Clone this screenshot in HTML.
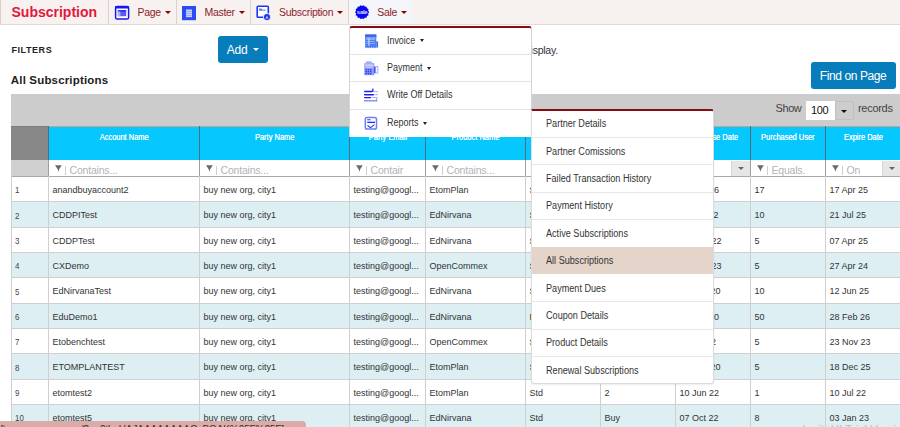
<!DOCTYPE html>
<html><head><meta charset="utf-8"><style>
html,body{margin:0;padding:0;}
body{width:900px;height:427px;overflow:hidden;position:relative;background:#fff;font-family:"Liberation Sans", sans-serif;}
.t{position:absolute;white-space:nowrap;}
.r{position:absolute;}
</style></head><body>
<div class="r" style="left:0px;top:0px;width:900px;height:24px;background:#f7f2ef;"></div>
<div class="r" style="left:0px;top:24px;width:900px;height:1px;background:#e2dcd8;"></div>
<div class="r" style="left:0px;top:0px;width:1px;height:24px;background:#d5d0cc;"></div>
<div class="t " style="left:11.5px;top:5.15px;font-size:14px;line-height:14px;color:#e3173d;font-weight:bold;letter-spacing:0px;">Subscription</div>
<div class="r" style="left:108px;top:0px;width:1px;height:24px;background:#d9d2ce;"></div>
<div class="r" style="left:176px;top:0px;width:1px;height:24px;background:#d9d2ce;"></div>
<div class="r" style="left:250px;top:0px;width:1px;height:24px;background:#d9d2ce;"></div>
<div class="r" style="left:348px;top:0px;width:1px;height:24px;background:#d9d2ce;"></div>
<div class="r" style="left:349px;top:0px;width:63px;height:24px;background:#f4f5f8;"></div>
<svg class="r" style="left:114px;top:5px" width="16" height="15" viewBox="0 0 16 15"><rect x="1.6" y="1.5" width="13" height="12.6" rx="1.6" fill="#fff" stroke="#1616ee" stroke-width="1.5"/><rect x="1" y="1" width="14" height="2.6" rx="1" fill="#1616ee"/><rect x="3.8" y="5.3" width="8.4" height="5.9" fill="#5b5bf0"/><rect x="3.8" y="5.3" width="8.4" height="1.2" fill="#1616ee"/><rect x="3.8" y="6.5" width="2.6" height="4.7" fill="#b0b0f6"/></svg>
<div class="t " style="left:137.5px;top:6.61px;font-size:10.5px;line-height:10.5px;color:#8c1d2e;font-weight:normal;letter-spacing:-0.3px;">Page</div>
<div class="r" style="left:164.5px;top:10.8px;width:0;height:0;border-left:3.0px solid transparent;border-right:3.0px solid transparent;border-top:3.3px solid #8b0000;"></div>
<svg class="r" style="left:182px;top:5.5px" width="15" height="15" viewBox="0 0 15 15"><rect x="0" y="0" width="14" height="14.2" fill="#2a4cf4"/><rect x="4" y="3.5" width="6" height="7.7" fill="#c9d2fb"/><rect x="4" y="5.2" width="6" height="0.6" fill="#7f93f6"/><rect x="4" y="7.1" width="6" height="0.6" fill="#7f93f6"/><rect x="4" y="9.0" width="6" height="0.6" fill="#7f93f6"/></svg>
<div class="t " style="left:204.5px;top:6.61px;font-size:10.5px;line-height:10.5px;color:#8c1d2e;font-weight:normal;letter-spacing:-0.3px;">Master</div>
<div class="r" style="left:238.5px;top:10.8px;width:0;height:0;border-left:3.0px solid transparent;border-right:3.0px solid transparent;border-top:3.3px solid #8b0000;"></div>
<svg class="r" style="left:256px;top:5px" width="16" height="16" viewBox="0 0 16 16"><path d="M8 12.3 H2 Q1.2 12.3 1.2 11.5 V2 Q1.2 1.2 2 1.2 H11.5 Q12.3 1.2 12.3 2 V8.8" fill="#fff" stroke="#1a34f2" stroke-width="1.6"/><rect x="3.2" y="3.5" width="2.6" height="1.8" fill="#5a6ef4"/><rect x="3.2" y="4.6" width="6.5" height="1" fill="#5a6ef4"/><circle cx="11" cy="12" r="3.6" fill="#1a34f2" stroke="#fff" stroke-width="0.8"/><path d="M9.6 13.6 L11 10.4 L12.4 13.6 Z" fill="#c8d0fc"/></svg>
<div class="t " style="left:279px;top:6.61px;font-size:10.5px;line-height:10.5px;color:#8c1d2e;font-weight:normal;letter-spacing:-0.3px;">Subscription</div>
<div class="r" style="left:337px;top:10.8px;width:0;height:0;border-left:3.0px solid transparent;border-right:3.0px solid transparent;border-top:3.3px solid #8b0000;"></div>
<svg class="r" style="left:354.5px;top:5.3px" width="15" height="15" viewBox="0 0 15 15"><polygon points="14.20,7.20 13.14,8.58 13.50,10.28 11.95,11.07 11.53,12.75 9.79,12.79 8.68,14.12 7.10,13.40 5.52,14.12 4.41,12.79 2.67,12.75 2.25,11.07 0.70,10.28 1.06,8.58 0.00,7.20 1.06,5.82 0.70,4.12 2.25,3.33 2.67,1.65 4.41,1.61 5.52,0.28 7.10,1.00 8.68,0.28 9.79,1.61 11.53,1.65 11.95,3.33 13.50,4.12 13.14,5.82" fill="#0808f2"/><text x="7.1" y="9.3" font-family="Liberation Sans" font-size="6" font-weight="bold" fill="#dcdcff" text-anchor="middle" letter-spacing="-0.3">sale</text></svg>
<div class="t " style="left:377.2px;top:6.81px;font-size:10.5px;line-height:10.5px;color:#8c1d2e;font-weight:normal;letter-spacing:-0.3px;">Sale</div>
<div class="r" style="left:401px;top:10.8px;width:0;height:0;border-left:3.0px solid transparent;border-right:3.0px solid transparent;border-top:3.3px solid #8b0000;"></div>
<div class="t " style="left:11.5px;top:46.28px;font-size:9px;line-height:9px;color:#222;font-weight:bold;letter-spacing:0.55px;">FILTERS</div>
<div class="r" style="left:218px;top:36px;width:50px;height:27px;background:#077dbc;border-radius:3px;"></div>
<div class="t " style="left:226.8px;top:43.94px;font-size:12px;line-height:12px;color:#fff;font-weight:normal;letter-spacing:-0.2px;">Add</div>
<div class="r" style="left:253.4px;top:48.3px;width:0;height:0;border-left:3.0px solid transparent;border-right:3.0px solid transparent;border-top:3px solid #fff;"></div>
<div class="t" style="right:342.20000000000005px;top:44.61px;font-size:10.5px;line-height:10.5px;color:#333;letter-spacing:-0.25px">No records to display.</div>
<div class="t " style="left:10.8px;top:75.27px;font-size:11.5px;line-height:11.5px;color:#222;font-weight:bold;letter-spacing:0.17px;">All Subscriptions</div>
<div class="r" style="left:811px;top:62px;width:85px;height:27px;background:#077dbc;border-radius:3px;"></div>
<div class="t " style="left:819.8px;top:70.14px;font-size:12px;line-height:12px;color:#fff;font-weight:normal;letter-spacing:-0.4px;">Find on Page</div>
<div class="r" style="left:11px;top:94px;width:889px;height:32px;background:#cccccc;"></div>
<div class="t " style="left:775.5px;top:103.39px;font-size:11px;line-height:11px;color:#444;font-weight:normal;letter-spacing:-0.4px;">Show</div>
<div class="r" style="left:805.5px;top:101px;width:29px;height:19px;background:#fff;"></div>
<div class="r" style="left:834.5px;top:101px;width:19.5px;height:19px;background:#cdcdcd;border:1px solid #c0c0c0;border-radius:0 2px 2px 0;box-sizing:border-box;"></div>
<div class="t " style="left:811px;top:104.99px;font-size:11px;line-height:11px;color:#111;font-weight:normal;letter-spacing:-0.4px;">100</div>
<div class="r" style="left:841px;top:109.5px;width:0;height:0;border-left:3.0px solid transparent;border-right:3.0px solid transparent;border-top:3px solid #111;"></div>
<div class="t " style="left:858px;top:103.39px;font-size:11px;line-height:11px;color:#444;font-weight:normal;letter-spacing:-0.3px;">records</div>
<div class="r" style="left:11px;top:126px;width:37px;height:34px;background:#888888;"></div>
<div class="r" style="left:48px;top:126px;width:852px;height:34px;background:#06c8ff;"></div>
<div class="r" style="left:48px;top:126px;width:852px;height:1px;background:#c0a496;"></div>
<div class="r" style="left:11px;top:126px;width:37px;height:1px;background:#7c7c7c;"></div>
<div class="r" style="left:48px;top:126px;width:1px;height:34px;background:#4e6f7a;"></div>
<div class="r" style="left:199px;top:126px;width:1px;height:34px;background:#4e6f7a;"></div>
<div class="r" style="left:349px;top:126px;width:1px;height:34px;background:#4e6f7a;"></div>
<div class="r" style="left:425px;top:126px;width:1px;height:34px;background:#4e6f7a;"></div>
<div class="r" style="left:525px;top:126px;width:1px;height:34px;background:#4e6f7a;"></div>
<div class="r" style="left:600px;top:126px;width:1px;height:34px;background:#4e6f7a;"></div>
<div class="r" style="left:675px;top:126px;width:1px;height:34px;background:#4e6f7a;"></div>
<div class="r" style="left:750px;top:126px;width:1px;height:34px;background:#4e6f7a;"></div>
<div class="r" style="left:825px;top:126px;width:1px;height:34px;background:#4e6f7a;"></div>
<div class="t" style="left:48.5px;width:151px;top:132.72px;font-size:8.6px;line-height:8.6px;color:#fff;text-align:center;"><span style="display:inline-block;transform:scaleX(0.87);text-shadow:0 0 0.3px #fff">Account Name</span></div>
<div class="t" style="left:199.5px;width:150px;top:132.72px;font-size:8.6px;line-height:8.6px;color:#fff;text-align:center;"><span style="display:inline-block;transform:scaleX(0.87);text-shadow:0 0 0.3px #fff">Party Name</span></div>
<div class="t" style="left:349.5px;width:76px;top:132.72px;font-size:8.6px;line-height:8.6px;color:#fff;text-align:center;"><span style="display:inline-block;transform:scaleX(0.87);text-shadow:0 0 0.3px #fff">Party Email</span></div>
<div class="t" style="left:425.5px;width:100px;top:132.72px;font-size:8.6px;line-height:8.6px;color:#fff;text-align:center;"><span style="display:inline-block;transform:scaleX(0.87);text-shadow:0 0 0.3px #fff">Product Name</span></div>
<div class="t" style="left:525.5px;width:75px;top:132.72px;font-size:8.6px;line-height:8.6px;color:#fff;text-align:center;"><span style="display:inline-block;transform:scaleX(0.87);text-shadow:0 0 0.3px #fff">Plan Type</span></div>
<div class="t" style="left:600.5px;width:75px;top:132.72px;font-size:8.6px;line-height:8.6px;color:#fff;text-align:center;"><span style="display:inline-block;transform:scaleX(0.87);text-shadow:0 0 0.3px #fff">Sub Type</span></div>
<div class="t" style="left:675.5px;width:75px;top:132.72px;font-size:8.6px;line-height:8.6px;color:#fff;text-align:center;"><span style="display:inline-block;transform:scaleX(0.87);text-shadow:0 0 0.3px #fff">Purchase Date</span></div>
<div class="t" style="left:750.5px;width:75px;top:132.72px;font-size:8.6px;line-height:8.6px;color:#fff;text-align:center;"><span style="display:inline-block;transform:scaleX(0.87);text-shadow:0 0 0.3px #fff">Purchased User</span></div>
<div class="t" style="left:825.5px;width:75px;top:132.72px;font-size:8.6px;line-height:8.6px;color:#fff;text-align:center;"><span style="display:inline-block;transform:scaleX(0.87);text-shadow:0 0 0.3px #fff">Expire Date</span></div>
<div class="r" style="left:11px;top:160px;width:37px;height:16px;background:#d0d0d0;"></div>
<div class="r" style="left:48px;top:160px;width:852px;height:16px;background:#fff;"></div>
<div class="r" style="left:11px;top:176px;width:889px;height:1px;background:#a9a9a9;"></div>
<div class="r" style="left:48px;top:160px;width:1px;height:16px;background:#a0a0a0;"></div>
<svg class="r" style="left:54.6px;top:164.6px" width="7" height="7" viewBox="0 0 7 7"><path d="M0 0.2 H6.8 L4 4.6 L3.7 6.2 H3.1 L2.8 4.6 Z" fill="#6a6a6a"/></svg>
<div class="r" style="left:65px;top:166.2px;width:1px;height:9.3px;background:#d6cdc8;"></div>
<div class="t " style="left:69.5px;top:165.11px;font-size:10.5px;line-height:10.5px;color:#b2b2ba;font-weight:normal;letter-spacing:-0.2px;">Contains...</div>
<div class="r" style="left:199px;top:160px;width:1px;height:16px;background:#a0a0a0;"></div>
<svg class="r" style="left:205.6px;top:164.6px" width="7" height="7" viewBox="0 0 7 7"><path d="M0 0.2 H6.8 L4 4.6 L3.7 6.2 H3.1 L2.8 4.6 Z" fill="#6a6a6a"/></svg>
<div class="r" style="left:216px;top:166.2px;width:1px;height:9.3px;background:#d6cdc8;"></div>
<div class="t " style="left:220.5px;top:165.11px;font-size:10.5px;line-height:10.5px;color:#b2b2ba;font-weight:normal;letter-spacing:-0.2px;">Contains...</div>
<div class="r" style="left:349px;top:160px;width:1px;height:16px;background:#a0a0a0;"></div>
<svg class="r" style="left:355.6px;top:164.6px" width="7" height="7" viewBox="0 0 7 7"><path d="M0 0.2 H6.8 L4 4.6 L3.7 6.2 H3.1 L2.8 4.6 Z" fill="#6a6a6a"/></svg>
<div class="r" style="left:366px;top:166.2px;width:1px;height:9.3px;background:#d6cdc8;"></div>
<div class="t " style="left:370.5px;top:165.11px;font-size:10.5px;line-height:10.5px;color:#b2b2ba;font-weight:normal;letter-spacing:-0.2px;">Contair</div>
<div class="r" style="left:425px;top:160px;width:1px;height:16px;background:#a0a0a0;"></div>
<svg class="r" style="left:431.6px;top:164.6px" width="7" height="7" viewBox="0 0 7 7"><path d="M0 0.2 H6.8 L4 4.6 L3.7 6.2 H3.1 L2.8 4.6 Z" fill="#6a6a6a"/></svg>
<div class="r" style="left:442px;top:166.2px;width:1px;height:9.3px;background:#d6cdc8;"></div>
<div class="t " style="left:446.5px;top:165.11px;font-size:10.5px;line-height:10.5px;color:#b2b2ba;font-weight:normal;letter-spacing:-0.2px;">Contains...</div>
<div class="r" style="left:525px;top:160px;width:1px;height:16px;background:#a0a0a0;"></div>
<svg class="r" style="left:531.6px;top:164.6px" width="7" height="7" viewBox="0 0 7 7"><path d="M0 0.2 H6.8 L4 4.6 L3.7 6.2 H3.1 L2.8 4.6 Z" fill="#6a6a6a"/></svg>
<div class="r" style="left:542px;top:166.2px;width:1px;height:9.3px;background:#d6cdc8;"></div>
<div class="t " style="left:546.5px;top:165.11px;font-size:10.5px;line-height:10.5px;color:#b2b2ba;font-weight:normal;letter-spacing:-0.2px;">Contains...</div>
<div class="r" style="left:600px;top:160px;width:1px;height:16px;background:#a0a0a0;"></div>
<svg class="r" style="left:606.6px;top:164.6px" width="7" height="7" viewBox="0 0 7 7"><path d="M0 0.2 H6.8 L4 4.6 L3.7 6.2 H3.1 L2.8 4.6 Z" fill="#6a6a6a"/></svg>
<div class="r" style="left:617px;top:166.2px;width:1px;height:9.3px;background:#d6cdc8;"></div>
<div class="t " style="left:621.5px;top:165.11px;font-size:10.5px;line-height:10.5px;color:#b2b2ba;font-weight:normal;letter-spacing:-0.2px;">Contains...</div>
<div class="r" style="left:675px;top:160px;width:1px;height:16px;background:#a0a0a0;"></div>
<svg class="r" style="left:681.6px;top:164.6px" width="7" height="7" viewBox="0 0 7 7"><path d="M0 0.2 H6.8 L4 4.6 L3.7 6.2 H3.1 L2.8 4.6 Z" fill="#6a6a6a"/></svg>
<div class="r" style="left:692px;top:166.2px;width:1px;height:9.3px;background:#d6cdc8;"></div>
<div class="r" style="left:750px;top:160px;width:1px;height:16px;background:#a0a0a0;"></div>
<svg class="r" style="left:756.6px;top:164.6px" width="7" height="7" viewBox="0 0 7 7"><path d="M0 0.2 H6.8 L4 4.6 L3.7 6.2 H3.1 L2.8 4.6 Z" fill="#6a6a6a"/></svg>
<div class="r" style="left:767px;top:166.2px;width:1px;height:9.3px;background:#d6cdc8;"></div>
<div class="t " style="left:771.5px;top:165.11px;font-size:10.5px;line-height:10.5px;color:#b2b2ba;font-weight:normal;letter-spacing:-0.2px;">Equals.</div>
<div class="r" style="left:825px;top:160px;width:1px;height:16px;background:#a0a0a0;"></div>
<svg class="r" style="left:831.6px;top:164.6px" width="7" height="7" viewBox="0 0 7 7"><path d="M0 0.2 H6.8 L4 4.6 L3.7 6.2 H3.1 L2.8 4.6 Z" fill="#6a6a6a"/></svg>
<div class="r" style="left:842px;top:166.2px;width:1px;height:9.3px;background:#d6cdc8;"></div>
<div class="t " style="left:846.5px;top:165.11px;font-size:10.5px;line-height:10.5px;color:#b2b2ba;font-weight:normal;letter-spacing:-0.2px;">On</div>
<div class="r" style="left:731px;top:160.5px;width:18.5px;height:15px;background:#e6e6e6;border-left:1px solid #d6d6d6;box-sizing:border-box;"></div>
<div class="r" style="left:737.5px;top:167px;width:0;height:0;border-left:3.0px solid transparent;border-right:3.0px solid transparent;border-top:3px solid #666;"></div>
<div class="r" style="left:882px;top:160.5px;width:18.5px;height:15px;background:#e6e6e6;border-left:1px solid #d6d6d6;box-sizing:border-box;"></div>
<div class="r" style="left:888.5px;top:167px;width:0;height:0;border-left:3.0px solid transparent;border-right:3.0px solid transparent;border-top:3px solid #666;"></div>
<div class="r" style="left:11px;top:177.0px;width:889px;height:24.833px;background:#ffffff;"></div>
<div class="r" style="left:11px;top:201.333px;width:889px;height:1.3px;background:#cfcfcf;"></div>
<div class="t " style="left:14.5px;top:186.22px;font-size:8.6px;line-height:8.6px;color:#444;font-weight:normal;letter-spacing:0px;transform:scaleX(0.92);transform-origin:0 0;">1</div>
<div class="t " style="left:52.5px;top:185.88px;font-size:9px;line-height:9px;color:#333;font-weight:normal;letter-spacing:0px;">anandbuyaccount2</div>
<div class="t " style="left:203.5px;top:185.88px;font-size:9px;line-height:9px;color:#333;font-weight:normal;letter-spacing:0px;">buy new org, city1</div>
<div class="t " style="left:353.5px;top:185.88px;font-size:9px;line-height:9px;color:#333;font-weight:normal;letter-spacing:0px;">testing@googl...</div>
<div class="t " style="left:429.5px;top:185.88px;font-size:9px;line-height:9px;color:#333;font-weight:normal;letter-spacing:0px;">EtomPlan</div>
<div class="t " style="left:529.5px;top:185.88px;font-size:9px;line-height:9px;color:#333;font-weight:normal;letter-spacing:0px;">Std</div>
<div class="t " style="left:604.5px;top:185.88px;font-size:9px;line-height:9px;color:#333;font-weight:normal;letter-spacing:0px;">Buy</div>
<div class="t " style="left:679.5px;top:185.88px;font-size:9px;line-height:9px;color:#333;font-weight:normal;letter-spacing:0px;">17 Jun 16</div>
<div class="t " style="left:754.5px;top:185.88px;font-size:9px;line-height:9px;color:#333;font-weight:normal;letter-spacing:0px;">17</div>
<div class="t " style="left:829.5px;top:185.88px;font-size:9px;line-height:9px;color:#333;font-weight:normal;letter-spacing:0px;">17 Apr 25</div>
<div class="r" style="left:11px;top:202.333px;width:889px;height:24.833px;background:#ddeff3;"></div>
<div class="r" style="left:11px;top:226.666px;width:889px;height:1.3px;background:#cfcfcf;"></div>
<div class="t " style="left:14.5px;top:211.55px;font-size:8.6px;line-height:8.6px;color:#444;font-weight:normal;letter-spacing:0px;transform:scaleX(0.92);transform-origin:0 0;">2</div>
<div class="t " style="left:52.5px;top:211.21px;font-size:9px;line-height:9px;color:#333;font-weight:normal;letter-spacing:0px;">CDDPITest</div>
<div class="t " style="left:203.5px;top:211.21px;font-size:9px;line-height:9px;color:#333;font-weight:normal;letter-spacing:0px;">buy new org, city1</div>
<div class="t " style="left:353.5px;top:211.21px;font-size:9px;line-height:9px;color:#333;font-weight:normal;letter-spacing:0px;">testing@googl...</div>
<div class="t " style="left:429.5px;top:211.21px;font-size:9px;line-height:9px;color:#333;font-weight:normal;letter-spacing:0px;">EdNirvana</div>
<div class="t " style="left:529.5px;top:211.21px;font-size:9px;line-height:9px;color:#333;font-weight:normal;letter-spacing:0px;">Std</div>
<div class="t " style="left:604.5px;top:211.21px;font-size:9px;line-height:9px;color:#333;font-weight:normal;letter-spacing:0px;">Buy</div>
<div class="t " style="left:679.5px;top:211.21px;font-size:9px;line-height:9px;color:#333;font-weight:normal;letter-spacing:0px;">21 Oct 22</div>
<div class="t " style="left:754.5px;top:211.21px;font-size:9px;line-height:9px;color:#333;font-weight:normal;letter-spacing:0px;">10</div>
<div class="t " style="left:829.5px;top:211.21px;font-size:9px;line-height:9px;color:#333;font-weight:normal;letter-spacing:0px;">21 Jul 25</div>
<div class="r" style="left:11px;top:227.666px;width:889px;height:24.833px;background:#ffffff;"></div>
<div class="r" style="left:11px;top:251.999px;width:889px;height:1.3px;background:#cfcfcf;"></div>
<div class="t " style="left:14.5px;top:236.89px;font-size:8.6px;line-height:8.6px;color:#444;font-weight:normal;letter-spacing:0px;transform:scaleX(0.92);transform-origin:0 0;">3</div>
<div class="t " style="left:52.5px;top:236.55px;font-size:9px;line-height:9px;color:#333;font-weight:normal;letter-spacing:0px;">CDDPTest</div>
<div class="t " style="left:203.5px;top:236.55px;font-size:9px;line-height:9px;color:#333;font-weight:normal;letter-spacing:0px;">buy new org, city1</div>
<div class="t " style="left:353.5px;top:236.55px;font-size:9px;line-height:9px;color:#333;font-weight:normal;letter-spacing:0px;">testing@googl...</div>
<div class="t " style="left:429.5px;top:236.55px;font-size:9px;line-height:9px;color:#333;font-weight:normal;letter-spacing:0px;">EdNirvana</div>
<div class="t " style="left:529.5px;top:236.55px;font-size:9px;line-height:9px;color:#333;font-weight:normal;letter-spacing:0px;">Std</div>
<div class="t " style="left:604.5px;top:236.55px;font-size:9px;line-height:9px;color:#333;font-weight:normal;letter-spacing:0px;">Buy</div>
<div class="t " style="left:679.5px;top:236.55px;font-size:9px;line-height:9px;color:#333;font-weight:normal;letter-spacing:0px;">07 May 22</div>
<div class="t " style="left:754.5px;top:236.55px;font-size:9px;line-height:9px;color:#333;font-weight:normal;letter-spacing:0px;">5</div>
<div class="t " style="left:829.5px;top:236.55px;font-size:9px;line-height:9px;color:#333;font-weight:normal;letter-spacing:0px;">07 Apr 25</div>
<div class="r" style="left:11px;top:252.999px;width:889px;height:24.833px;background:#ddeff3;"></div>
<div class="r" style="left:11px;top:277.332px;width:889px;height:1.3px;background:#cfcfcf;"></div>
<div class="t " style="left:14.5px;top:262.22px;font-size:8.6px;line-height:8.6px;color:#444;font-weight:normal;letter-spacing:0px;transform:scaleX(0.92);transform-origin:0 0;">4</div>
<div class="t " style="left:52.5px;top:261.88px;font-size:9px;line-height:9px;color:#333;font-weight:normal;letter-spacing:0px;">CXDemo</div>
<div class="t " style="left:203.5px;top:261.88px;font-size:9px;line-height:9px;color:#333;font-weight:normal;letter-spacing:0px;">buy new org, city1</div>
<div class="t " style="left:353.5px;top:261.88px;font-size:9px;line-height:9px;color:#333;font-weight:normal;letter-spacing:0px;">testing@googl...</div>
<div class="t " style="left:429.5px;top:261.88px;font-size:9px;line-height:9px;color:#333;font-weight:normal;letter-spacing:0px;">OpenCommex</div>
<div class="t " style="left:529.5px;top:261.88px;font-size:9px;line-height:9px;color:#333;font-weight:normal;letter-spacing:0px;">Std</div>
<div class="t " style="left:604.5px;top:261.88px;font-size:9px;line-height:9px;color:#333;font-weight:normal;letter-spacing:0px;">Buy</div>
<div class="t " style="left:679.5px;top:261.88px;font-size:9px;line-height:9px;color:#333;font-weight:normal;letter-spacing:0px;">27 May 23</div>
<div class="t " style="left:754.5px;top:261.88px;font-size:9px;line-height:9px;color:#333;font-weight:normal;letter-spacing:0px;">5</div>
<div class="t " style="left:829.5px;top:261.88px;font-size:9px;line-height:9px;color:#333;font-weight:normal;letter-spacing:0px;">27 Apr 24</div>
<div class="r" style="left:11px;top:278.332px;width:889px;height:24.83299999999997px;background:#ffffff;"></div>
<div class="r" style="left:11px;top:302.66499999999996px;width:889px;height:1.3px;background:#cfcfcf;"></div>
<div class="t " style="left:14.5px;top:287.55px;font-size:8.6px;line-height:8.6px;color:#444;font-weight:normal;letter-spacing:0px;transform:scaleX(0.92);transform-origin:0 0;">5</div>
<div class="t " style="left:52.5px;top:287.21px;font-size:9px;line-height:9px;color:#333;font-weight:normal;letter-spacing:0px;">EdNirvanaTest</div>
<div class="t " style="left:203.5px;top:287.21px;font-size:9px;line-height:9px;color:#333;font-weight:normal;letter-spacing:0px;">buy new org, city1</div>
<div class="t " style="left:353.5px;top:287.21px;font-size:9px;line-height:9px;color:#333;font-weight:normal;letter-spacing:0px;">testing@googl...</div>
<div class="t " style="left:429.5px;top:287.21px;font-size:9px;line-height:9px;color:#333;font-weight:normal;letter-spacing:0px;">EdNirvana</div>
<div class="t " style="left:529.5px;top:287.21px;font-size:9px;line-height:9px;color:#333;font-weight:normal;letter-spacing:0px;">Std</div>
<div class="t " style="left:604.5px;top:287.21px;font-size:9px;line-height:9px;color:#333;font-weight:normal;letter-spacing:0px;">Buy</div>
<div class="t " style="left:679.5px;top:287.21px;font-size:9px;line-height:9px;color:#333;font-weight:normal;letter-spacing:0px;">12 Sep 20</div>
<div class="t " style="left:754.5px;top:287.21px;font-size:9px;line-height:9px;color:#333;font-weight:normal;letter-spacing:0px;">10</div>
<div class="t " style="left:829.5px;top:287.21px;font-size:9px;line-height:9px;color:#333;font-weight:normal;letter-spacing:0px;">12 Jun 25</div>
<div class="r" style="left:11px;top:303.66499999999996px;width:889px;height:24.833000000000027px;background:#ddeff3;"></div>
<div class="r" style="left:11px;top:327.998px;width:889px;height:1.3px;background:#cfcfcf;"></div>
<div class="t " style="left:14.5px;top:312.89px;font-size:8.6px;line-height:8.6px;color:#444;font-weight:normal;letter-spacing:0px;transform:scaleX(0.92);transform-origin:0 0;">6</div>
<div class="t " style="left:52.5px;top:312.55px;font-size:9px;line-height:9px;color:#333;font-weight:normal;letter-spacing:0px;">EduDemo1</div>
<div class="t " style="left:203.5px;top:312.55px;font-size:9px;line-height:9px;color:#333;font-weight:normal;letter-spacing:0px;">buy new org, city1</div>
<div class="t " style="left:353.5px;top:312.55px;font-size:9px;line-height:9px;color:#333;font-weight:normal;letter-spacing:0px;">testing@googl...</div>
<div class="t " style="left:429.5px;top:312.55px;font-size:9px;line-height:9px;color:#333;font-weight:normal;letter-spacing:0px;">EdNirvana</div>
<div class="t " style="left:529.5px;top:312.55px;font-size:9px;line-height:9px;color:#333;font-weight:normal;letter-spacing:0px;">Pro</div>
<div class="t " style="left:604.5px;top:312.55px;font-size:9px;line-height:9px;color:#333;font-weight:normal;letter-spacing:0px;">Buy</div>
<div class="t " style="left:679.5px;top:312.55px;font-size:9px;line-height:9px;color:#333;font-weight:normal;letter-spacing:0px;">28 Jun 20</div>
<div class="t " style="left:754.5px;top:312.55px;font-size:9px;line-height:9px;color:#333;font-weight:normal;letter-spacing:0px;">50</div>
<div class="t " style="left:829.5px;top:312.55px;font-size:9px;line-height:9px;color:#333;font-weight:normal;letter-spacing:0px;">28 Feb 26</div>
<div class="r" style="left:11px;top:328.998px;width:889px;height:24.833000000000027px;background:#ffffff;"></div>
<div class="r" style="left:11px;top:353.331px;width:889px;height:1.3px;background:#cfcfcf;"></div>
<div class="t " style="left:14.5px;top:338.22px;font-size:8.6px;line-height:8.6px;color:#444;font-weight:normal;letter-spacing:0px;transform:scaleX(0.92);transform-origin:0 0;">7</div>
<div class="t " style="left:52.5px;top:337.88px;font-size:9px;line-height:9px;color:#333;font-weight:normal;letter-spacing:0px;">Etobenchtest</div>
<div class="t " style="left:203.5px;top:337.88px;font-size:9px;line-height:9px;color:#333;font-weight:normal;letter-spacing:0px;">buy new org, city1</div>
<div class="t " style="left:353.5px;top:337.88px;font-size:9px;line-height:9px;color:#333;font-weight:normal;letter-spacing:0px;">testing@googl...</div>
<div class="t " style="left:429.5px;top:337.88px;font-size:9px;line-height:9px;color:#333;font-weight:normal;letter-spacing:0px;">OpenCommex</div>
<div class="t " style="left:529.5px;top:337.88px;font-size:9px;line-height:9px;color:#333;font-weight:normal;letter-spacing:0px;">Std</div>
<div class="t " style="left:604.5px;top:337.88px;font-size:9px;line-height:9px;color:#333;font-weight:normal;letter-spacing:0px;">Buy</div>
<div class="t " style="left:679.5px;top:337.88px;font-size:9px;line-height:9px;color:#333;font-weight:normal;letter-spacing:0px;">23 Jul 22</div>
<div class="t " style="left:754.5px;top:337.88px;font-size:9px;line-height:9px;color:#333;font-weight:normal;letter-spacing:0px;">5</div>
<div class="t " style="left:829.5px;top:337.88px;font-size:9px;line-height:9px;color:#333;font-weight:normal;letter-spacing:0px;">23 Nov 23</div>
<div class="r" style="left:11px;top:354.331px;width:889px;height:24.83299999999997px;background:#ddeff3;"></div>
<div class="r" style="left:11px;top:378.664px;width:889px;height:1.3px;background:#cfcfcf;"></div>
<div class="t " style="left:14.5px;top:363.55px;font-size:8.6px;line-height:8.6px;color:#444;font-weight:normal;letter-spacing:0px;transform:scaleX(0.92);transform-origin:0 0;">8</div>
<div class="t " style="left:52.5px;top:363.21px;font-size:9px;line-height:9px;color:#333;font-weight:normal;letter-spacing:0px;">ETOMPLANTEST</div>
<div class="t " style="left:203.5px;top:363.21px;font-size:9px;line-height:9px;color:#333;font-weight:normal;letter-spacing:0px;">buy new org, city1</div>
<div class="t " style="left:353.5px;top:363.21px;font-size:9px;line-height:9px;color:#333;font-weight:normal;letter-spacing:0px;">testing@googl...</div>
<div class="t " style="left:429.5px;top:363.21px;font-size:9px;line-height:9px;color:#333;font-weight:normal;letter-spacing:0px;">EtomPlan</div>
<div class="t " style="left:529.5px;top:363.21px;font-size:9px;line-height:9px;color:#333;font-weight:normal;letter-spacing:0px;">Std</div>
<div class="t " style="left:604.5px;top:363.21px;font-size:9px;line-height:9px;color:#333;font-weight:normal;letter-spacing:0px;">Buy</div>
<div class="t " style="left:679.5px;top:363.21px;font-size:9px;line-height:9px;color:#333;font-weight:normal;letter-spacing:0px;">18 Sep 20</div>
<div class="t " style="left:754.5px;top:363.21px;font-size:9px;line-height:9px;color:#333;font-weight:normal;letter-spacing:0px;">5</div>
<div class="t " style="left:829.5px;top:363.21px;font-size:9px;line-height:9px;color:#333;font-weight:normal;letter-spacing:0px;">18 Dec 25</div>
<div class="r" style="left:11px;top:379.664px;width:889px;height:24.83299999999997px;background:#ffffff;"></div>
<div class="r" style="left:11px;top:403.99699999999996px;width:889px;height:1.3px;background:#cfcfcf;"></div>
<div class="t " style="left:14.5px;top:388.88px;font-size:8.6px;line-height:8.6px;color:#444;font-weight:normal;letter-spacing:0px;transform:scaleX(0.92);transform-origin:0 0;">9</div>
<div class="t " style="left:52.5px;top:388.55px;font-size:9px;line-height:9px;color:#333;font-weight:normal;letter-spacing:0px;">etomtest2</div>
<div class="t " style="left:203.5px;top:388.55px;font-size:9px;line-height:9px;color:#333;font-weight:normal;letter-spacing:0px;">buy new org, city1</div>
<div class="t " style="left:353.5px;top:388.55px;font-size:9px;line-height:9px;color:#333;font-weight:normal;letter-spacing:0px;">testing@googl...</div>
<div class="t " style="left:429.5px;top:388.55px;font-size:9px;line-height:9px;color:#333;font-weight:normal;letter-spacing:0px;">EtomPlan</div>
<div class="t " style="left:529.5px;top:388.55px;font-size:9px;line-height:9px;color:#333;font-weight:normal;letter-spacing:0px;">Std</div>
<div class="t " style="left:604.5px;top:388.55px;font-size:9px;line-height:9px;color:#333;font-weight:normal;letter-spacing:0px;">2</div>
<div class="t " style="left:679.5px;top:388.55px;font-size:9px;line-height:9px;color:#333;font-weight:normal;letter-spacing:0px;">10 Jun 22</div>
<div class="t " style="left:754.5px;top:388.55px;font-size:9px;line-height:9px;color:#333;font-weight:normal;letter-spacing:0px;">1</div>
<div class="t " style="left:829.5px;top:388.55px;font-size:9px;line-height:9px;color:#333;font-weight:normal;letter-spacing:0px;">10 Jul 22</div>
<div class="r" style="left:11px;top:404.99699999999996px;width:889px;height:24.833000000000027px;background:#ddeff3;"></div>
<div class="r" style="left:11px;top:429.33px;width:889px;height:1.3px;background:#cfcfcf;"></div>
<div class="t " style="left:14.5px;top:414.22px;font-size:8.6px;line-height:8.6px;color:#444;font-weight:normal;letter-spacing:0px;transform:scaleX(0.92);transform-origin:0 0;">10</div>
<div class="t " style="left:52.5px;top:413.88px;font-size:9px;line-height:9px;color:#333;font-weight:normal;letter-spacing:0px;">etomtest5</div>
<div class="t " style="left:203.5px;top:413.88px;font-size:9px;line-height:9px;color:#333;font-weight:normal;letter-spacing:0px;">buy new org, city1</div>
<div class="t " style="left:353.5px;top:413.88px;font-size:9px;line-height:9px;color:#333;font-weight:normal;letter-spacing:0px;">testing@googl...</div>
<div class="t " style="left:429.5px;top:413.88px;font-size:9px;line-height:9px;color:#333;font-weight:normal;letter-spacing:0px;">EdNirvana</div>
<div class="t " style="left:529.5px;top:413.88px;font-size:9px;line-height:9px;color:#333;font-weight:normal;letter-spacing:0px;">Std</div>
<div class="t " style="left:604.5px;top:413.88px;font-size:9px;line-height:9px;color:#333;font-weight:normal;letter-spacing:0px;">Buy</div>
<div class="t " style="left:679.5px;top:413.88px;font-size:9px;line-height:9px;color:#333;font-weight:normal;letter-spacing:0px;">07 Oct 22</div>
<div class="t " style="left:754.5px;top:413.88px;font-size:9px;line-height:9px;color:#333;font-weight:normal;letter-spacing:0px;">8</div>
<div class="t " style="left:829.5px;top:413.88px;font-size:9px;line-height:9px;color:#333;font-weight:normal;letter-spacing:0px;">03 Jan 23</div>
<div class="r" style="left:11px;top:176px;width:1.3px;height:251px;background:#cfcfcf;"></div>
<div class="r" style="left:48px;top:176px;width:1.3px;height:251px;background:#cfcfcf;"></div>
<div class="r" style="left:199px;top:176px;width:1.3px;height:251px;background:#cfcfcf;"></div>
<div class="r" style="left:349px;top:176px;width:1.3px;height:251px;background:#cfcfcf;"></div>
<div class="r" style="left:425px;top:176px;width:1.3px;height:251px;background:#cfcfcf;"></div>
<div class="r" style="left:525px;top:176px;width:1.3px;height:251px;background:#cfcfcf;"></div>
<div class="r" style="left:600px;top:176px;width:1.3px;height:251px;background:#cfcfcf;"></div>
<div class="r" style="left:675px;top:176px;width:1.3px;height:251px;background:#cfcfcf;"></div>
<div class="r" style="left:750px;top:176px;width:1.3px;height:251px;background:#cfcfcf;"></div>
<div class="r" style="left:825px;top:176px;width:1.3px;height:251px;background:#cfcfcf;"></div>
<div class="t " style="left:802.5px;top:423.77px;font-size:11.5px;line-height:11.5px;color:#bdbdbd;font-weight:normal;letter-spacing:0px;">IgniteUI Trial Version</div>
<div class="r" style="left:0;top:420.6px;width:306px;height:10px;background:#daaba7;border-top-right-radius:4px;overflow:hidden"><div class="t" style="right:22px;top:4.8px;font-size:10px;line-height:10px;color:#333;letter-spacing:-0.1px">javascript:__soft.nerve.sonar.com/?a=2tk=UAJAAAAAAAAC_BOAK%25F%25F]</div></div>
<div class="r" style="left:349px;top:26px;width:182.5px;height:111px;background:#fff;border-left:1px solid #d4d4d4;border-right:1px solid #d4d4d4;border-top:2px solid #8a0b12;border-radius:3px 3px 0 0;box-sizing:border-box;"></div>
<div class="r" style="left:350px;top:54px;width:180.5px;height:1px;background:#e4e4e4;"></div>
<div class="r" style="left:350px;top:81px;width:180.5px;height:1px;background:#e4e4e4;"></div>
<div class="r" style="left:350px;top:109px;width:180.5px;height:1px;background:#e4e4e4;"></div>
<svg class="r" style="left:365px;top:33.5px" width="14" height="15" viewBox="0 0 14 15"><path d="M0.2 0.5 H11.3 V13.2 L10.2 14.3 L9 13.2 L7.8 14.3 L6.6 13.2 L5.4 14.3 L4.2 13.2 L3 14.3 L1.8 13.2 L0.6 14.3 L0.2 13.8 Z" fill="#4c7cf2"/><rect x="0.2" y="0.5" width="11.1" height="2.8" fill="#3a68ee"/><rect x="1.2" y="3.6" width="9.5" height="0.8" fill="#dbe5fd"/><rect x="1.5" y="5" width="8.5" height="0.7" fill="#a8c0fa"/><rect x="1.5" y="7" width="8.5" height="0.7" fill="#a8c0fa"/><rect x="1.5" y="9" width="8.5" height="0.7" fill="#a8c0fa"/><rect x="3.2" y="4.4" width="1.3" height="7.5" fill="#b9cdfb"/><rect x="11.3" y="7.4" width="1.8" height="6.2" fill="#3d6cf0"/></svg>
<div class="t " style="left:387px;top:35.73px;font-size:10px;line-height:10px;color:#333;font-weight:normal;letter-spacing:0px;transform:scaleX(0.89);transform-origin:0 0;">Invoice</div>
<div class="r" style="left:419.6px;top:39.4px;width:0;height:0;border-left:2.8px solid transparent;border-right:2.8px solid transparent;border-top:3px solid #222;"></div>
<svg class="r" style="left:364px;top:60.5px" width="15" height="15" viewBox="0 0 15 15"><rect x="1.8" y="0.5" width="6" height="1.3" fill="#8a98f4"/><rect x="0.3" y="2.2" width="10" height="12" fill="#8c9af5"/><rect x="1.3" y="3.2" width="8" height="2.5" fill="#c6ccfa"/><rect x="1.3" y="6.2" width="8" height="1" fill="#d8b8f4"/><g fill="#2f3ff0"><rect x="1.3" y="8" width="1.6" height="1.3"/><rect x="3.6" y="8" width="1.6" height="1.3"/><rect x="5.9" y="8" width="1.6" height="1.3"/><rect x="1.3" y="10" width="1.6" height="1.3"/><rect x="3.6" y="10" width="1.6" height="1.3"/><rect x="5.9" y="10" width="1.6" height="1.3"/><rect x="1.3" y="12" width="1.6" height="1.3"/><rect x="3.6" y="12" width="1.6" height="1.3"/><rect x="5.9" y="12" width="1.6" height="1.3"/></g><rect x="10.3" y="5.6" width="1.4" height="6.5" fill="#1010e8"/><rect x="11.7" y="5.6" width="2.2" height="6.5" fill="#fff" stroke="#8c9af5" stroke-width="0.8"/></svg>
<div class="t " style="left:386.8px;top:62.53px;font-size:10px;line-height:10px;color:#333;font-weight:normal;letter-spacing:0px;transform:scaleX(0.9);transform-origin:0 0;">Payment</div>
<div class="r" style="left:426.6px;top:67px;width:0;height:0;border-left:2.8px solid transparent;border-right:2.8px solid transparent;border-top:3px solid #222;"></div>
<svg class="r" style="left:364px;top:88px" width="15" height="14" viewBox="0 0 15 14"><g fill="#1d1de6"><rect x="0" y="2.8" width="8.6" height="1.5" rx="0.7"/><rect x="8.2" y="0.6" width="1.3" height="3.4"/><rect x="0" y="5.9" width="10" height="1.5" rx="0.7"/><rect x="0" y="8.9" width="7.2" height="1.4" rx="0.7"/></g><g fill="#b5b9f6"><rect x="9.5" y="3" width="4.5" height="1.1"/><rect x="10.5" y="6.1" width="3.5" height="1.1"/><rect x="7.5" y="9" width="6.5" height="1.1"/></g><rect x="0" y="12" width="13" height="1.5" fill="#8e92f2"/><rect x="12" y="10.5" width="1.2" height="3" fill="#8e92f2"/></svg>
<div class="t " style="left:386.5px;top:90.23px;font-size:10px;line-height:10px;color:#333;font-weight:normal;letter-spacing:0px;transform:scaleX(0.905);transform-origin:0 0;">Write Off Details</div>
<svg class="r" style="left:364px;top:116px" width="14" height="15" viewBox="0 0 14 15"><rect x="1.3" y="1.5" width="11.2" height="11.6" rx="1.8" fill="#fff" stroke="#6b80f6" stroke-width="1.5"/><rect x="3.2" y="3.2" width="3.5" height="1.1" fill="#3a4ef2"/><rect x="3.2" y="5.7" width="7.8" height="1.3" fill="#1a2ef0"/><path d="M3.5 9.5 L5.2 10.8 L6.6 11.6 L10.4 8.6" fill="none" stroke="#2a3ef2" stroke-width="1.2"/></svg>
<div class="t " style="left:386.8px;top:117.83px;font-size:10px;line-height:10px;color:#333;font-weight:normal;letter-spacing:0px;transform:scaleX(0.9);transform-origin:0 0;">Reports</div>
<div class="r" style="left:422.6px;top:121.6px;width:0;height:0;border-left:2.8px solid transparent;border-right:2.8px solid transparent;border-top:3px solid #222;"></div>
<div class="r" style="left:530.5px;top:108.6px;width:183px;height:275.9px;background:#fff;border-left:1px solid #dcdcdc;border-right:1px solid #dcdcdc;border-bottom:1px solid #dcdcdc;border-top:2px solid #8a0b12;border-radius:0 3px 3px 3px;box-sizing:border-box;box-shadow:0 1px 2px rgba(0,0,0,0.08);"></div>
<div class="t " style="left:545.8px;top:119.23px;font-size:10px;line-height:10px;color:#333;font-weight:normal;letter-spacing:0px;transform:scaleX(0.91);transform-origin:0 0;">Partner Details</div>
<div class="r" style="left:531.5px;top:136.9px;width:181px;height:1px;background:#e8e8e8;"></div>
<div class="t " style="left:545.8px;top:146.62px;font-size:10px;line-height:10px;color:#333;font-weight:normal;letter-spacing:0px;transform:scaleX(0.91);transform-origin:0 0;">Partner Comissions</div>
<div class="r" style="left:531.5px;top:164.3px;width:181px;height:1px;background:#e8e8e8;"></div>
<div class="t " style="left:545.8px;top:174.00px;font-size:10px;line-height:10px;color:#333;font-weight:normal;letter-spacing:0px;transform:scaleX(0.91);transform-origin:0 0;">Failed Transaction History</div>
<div class="r" style="left:531.5px;top:191.7px;width:181px;height:1px;background:#e8e8e8;"></div>
<div class="t " style="left:545.8px;top:201.38px;font-size:10px;line-height:10px;color:#333;font-weight:normal;letter-spacing:0px;transform:scaleX(0.91);transform-origin:0 0;">Payment History</div>
<div class="r" style="left:531.5px;top:219.1px;width:181px;height:1px;background:#e8e8e8;"></div>
<div class="t " style="left:545.8px;top:228.75px;font-size:10px;line-height:10px;color:#333;font-weight:normal;letter-spacing:0px;transform:scaleX(0.91);transform-origin:0 0;">Active Subscriptions</div>
<div class="r" style="left:531.5px;top:247px;width:181px;height:27.4px;background:#e5d4ca;"></div>
<div class="t " style="left:545.8px;top:256.14px;font-size:10px;line-height:10px;color:#333;font-weight:normal;letter-spacing:0px;transform:scaleX(0.91);transform-origin:0 0;">All Subscriptions</div>
<div class="t " style="left:545.8px;top:283.52px;font-size:10px;line-height:10px;color:#333;font-weight:normal;letter-spacing:0px;transform:scaleX(0.91);transform-origin:0 0;">Payment Dues</div>
<div class="r" style="left:531.5px;top:301.29999999999995px;width:181px;height:1px;background:#e8e8e8;"></div>
<div class="t " style="left:545.8px;top:310.90px;font-size:10px;line-height:10px;color:#333;font-weight:normal;letter-spacing:0px;transform:scaleX(0.91);transform-origin:0 0;">Coupon Details</div>
<div class="r" style="left:531.5px;top:328.7px;width:181px;height:1px;background:#e8e8e8;"></div>
<div class="t " style="left:545.8px;top:338.28px;font-size:10px;line-height:10px;color:#333;font-weight:normal;letter-spacing:0px;transform:scaleX(0.91);transform-origin:0 0;">Product Details</div>
<div class="r" style="left:531.5px;top:356.1px;width:181px;height:1px;background:#e8e8e8;"></div>
<div class="t " style="left:545.8px;top:365.66px;font-size:10px;line-height:10px;color:#333;font-weight:normal;letter-spacing:0px;transform:scaleX(0.91);transform-origin:0 0;">Renewal Subscriptions</div>
</body></html>
